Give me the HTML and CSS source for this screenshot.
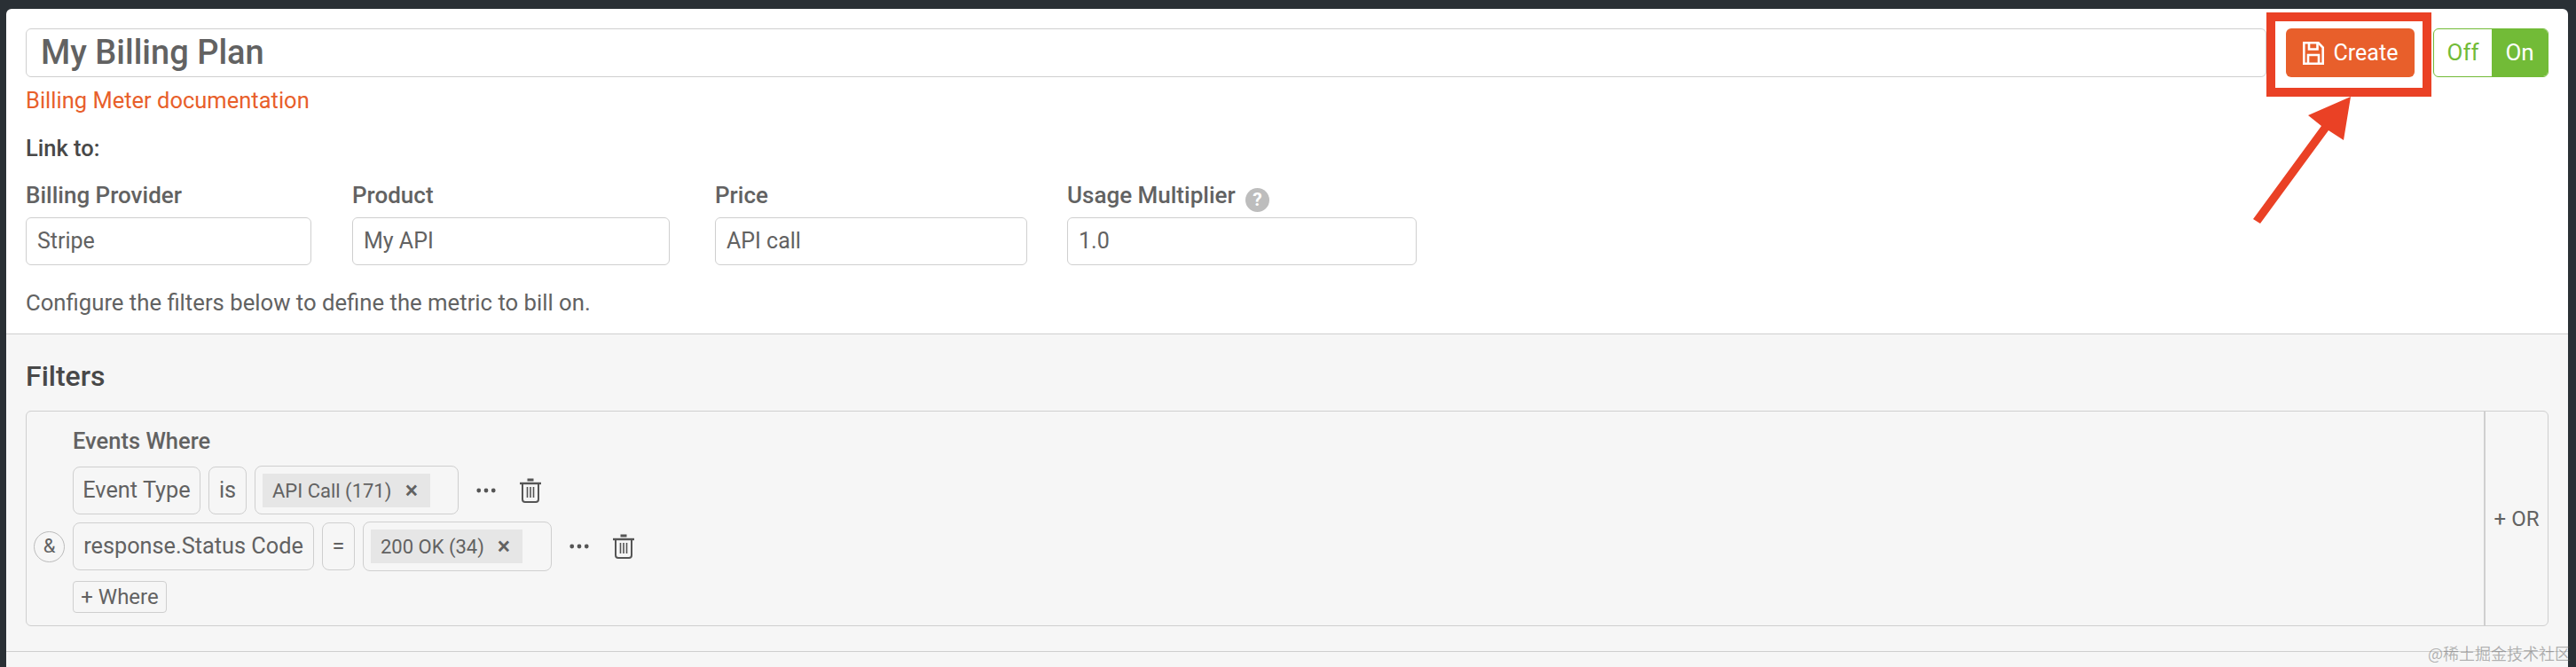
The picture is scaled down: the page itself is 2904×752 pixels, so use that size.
FILE: index.html
```html
<!DOCTYPE html>
<html lang="en">
<head>
  <meta charset="UTF-8" />
  <title>My Billing Plan</title>
  <link rel="stylesheet" href="styles.css">
</head>
<body>
  <div class="panel">
    <div class="top">
      <div class="title-row">
        <div class="title-input">My Billing Plan</div>
        <button class="create-btn">
          <svg class="save-icon" viewBox="0 0 24 26" fill="none" stroke="#fff" stroke-width="2.6">
            <path d="M1.3 1.3H17.5L22.7 6.5V24.7H1.3Z"/>
            <path d="M7 1.3V8.5H16.5V1.3"/>
            <path d="M6 24.7V15H18V24.7"/>
          </svg>
          Create
        </button>
        <div class="toggle">
          <span class="toggle-off">Off</span>
          <span class="toggle-on">On</span>
        </div>
      </div>

      <a class="doc-link" href="#">Billing Meter documentation</a>
      <div class="link-to">Link to:</div>

      <div class="fields">
        <div class="field field-provider">
          <label>Billing Provider</label>
          <div class="input">Stripe</div>
        </div>
        <div class="field field-product">
          <label>Product</label>
          <div class="input">My API</div>
        </div>
        <div class="field field-price">
          <label>Price</label>
          <div class="input">API call</div>
        </div>
        <div class="field field-usage">
          <label>Usage Multiplier <span class="help">?</span></label>
          <div class="input">1.0</div>
        </div>
      </div>

      <p class="hint">Configure the filters below to define the metric to bill on.</p>
    </div>

    <div class="filters">
      <h2>Filters</h2>
      <div class="filter-box">
        <div class="filter-body">
          <div class="events-where">Events Where</div>

          <div class="filter-row">
            <span class="conj conj-empty"></span>
            <div class="pill pill-type-1">Event Type</div>
            <div class="pill pill-op-1">is</div>
            <div class="value-box value-1">
              <span class="chip">API Call (171) <b>×</b></span>
            </div>
            <svg class="dots" viewBox="0 0 24 6" fill="#555">
              <circle cx="3" cy="3" r="2.6"/>
              <circle cx="12" cy="3" r="2.6"/>
              <circle cx="21" cy="3" r="2.6"/>
            </svg>
            <svg class="trash" viewBox="0 0 24 28" fill="none" stroke="#555" stroke-width="2">
              <path d="M0 6H24" stroke-width="2.4"/>
              <path d="M8.5 2H15.5" stroke-width="3"/>
              <path d="M3 6V24C3 26 4.5 27 6 27H18C19.5 27 21 26 21 24V6"/>
              <path d="M8.5 10V22M12 10V22M15.5 10V22" stroke-width="1.6"/>
            </svg>
          </div>

          <div class="filter-row filter-row-2">
            <span class="conj">&amp;</span>
            <div class="pill pill-type-2">response.Status Code</div>
            <div class="pill pill-op-2">=</div>
            <div class="value-box value-2">
              <span class="chip">200 OK (34) <b>×</b></span>
            </div>
            <svg class="dots" viewBox="0 0 24 6" fill="#555">
              <circle cx="3" cy="3" r="2.6"/>
              <circle cx="12" cy="3" r="2.6"/>
              <circle cx="21" cy="3" r="2.6"/>
            </svg>
            <svg class="trash" viewBox="0 0 24 28" fill="none" stroke="#555" stroke-width="2">
              <path d="M0 6H24" stroke-width="2.4"/>
              <path d="M8.5 2H15.5" stroke-width="3"/>
              <path d="M3 6V24C3 26 4.5 27 6 27H18C19.5 27 21 26 21 24V6"/>
              <path d="M8.5 10V22M12 10V22M15.5 10V22" stroke-width="1.6"/>
            </svg>
          </div>

          <button class="add-where">+ Where</button>
        </div>
        <div class="add-or">+ OR</div>
      </div>
    </div>
    <div class="next-section"></div>
  </div>

  <!-- annotation drawn over the screenshot -->
  <div class="callout-box"></div>
  <svg class="callout-arrow" viewBox="0 0 2904 752">
    <path d="M2540 247L2617 142L2602 130L2650 109L2642 158L2625 147L2548 252Z" fill="#ea4125"/>
  </svg>
  <div class="watermark">@稀土掘金技术社区</div>
</body>
</html>
```

FILE: styles.css
```css
:root {
  --text: #626262;
  --line: #cfcfcf;
  --orange: #e85f2b;
  --green: #72bb37;
  --grey-bg: #f6f6f6;
}

html, body {
  height: 100%;
}

body {
  margin: 0;
  height: 752px;
  overflow: hidden;
  box-sizing: border-box;
  padding: 10px 9px 0 7px;
  background: #2a3035;
  font-family: Roboto, sans-serif;
  color: var(--text);
}

.panel {
  background: #ffffff;
  border-radius: 6px 6px 0 0;
  height: 742px;
  overflow: hidden;
}

.top {
  padding: 22px 22px 20px 22px;
}

.title-row {
  display: flex;
  height: 55px;
}

.title-input {
  flex: 1;
  box-sizing: border-box;
  border: 1px solid var(--line);
  border-radius: 6px;
  padding-left: 16px;
  font-size: 38px;
  font-weight: 500;
  line-height: 52px;
}

.create-btn {
  width: 145px;
  margin: 0 21px 0 22px;
  padding: 0;
  border: none;
  border-radius: 6px;
  background: var(--orange);
  color: #fff;
  font-family: Roboto, sans-serif;
  font-size: 25px;
  display: flex;
  align-items: center;
  justify-content: center;
  gap: 11px;
}

.save-icon {
  width: 24px;
  height: 26px;
}

.toggle {
  display: flex;
  width: 130px;
  box-sizing: border-box;
  border: 1px solid var(--green);
  border-radius: 6px;
  overflow: hidden;
  font-size: 26px;
  line-height: 53px;
  text-align: center;
}

.toggle-off {
  width: 65px;
  color: var(--green);
}

.toggle-on {
  flex: 1;
  background: var(--green);
  color: #fff;
}

.doc-link {
  display: block;
  margin-top: 11px;
  color: var(--orange);
  font-size: 25.5px;
  line-height: 30px;
  text-decoration: none;
}

.link-to {
  margin-top: 24px;
  color: #484848;
  font-size: 25.5px;
  font-weight: 500;
  line-height: 30px;
}

.fields {
  display: flex;
  margin-top: 23px;
}

.field label {
  display: block;
  height: 30px;
  margin-bottom: 10px;
  font-size: 26px;
  font-weight: 500;
  line-height: 30px;
  white-space: nowrap;
}

.field-provider { width: 322px; margin-right: 46px; }
.field-product { width: 358px; margin-right: 51px; }
.field-price { width: 352px; margin-right: 45px; }
.field-usage { width: 394px; }

.input {
  box-sizing: border-box;
  height: 54px;
  border: 1px solid var(--line);
  border-radius: 6px;
  padding-left: 12px;
  font-size: 25px;
  line-height: 52px;
}

.help {
  display: inline-block;
  width: 27px;
  height: 27px;
  margin-left: 5px;
  border-radius: 50%;
  background: #bdbdbd;
  color: #fff;
  font-size: 21px;
  font-weight: 700;
  line-height: 27px;
  text-align: center;
  vertical-align: -3px;
}

.hint {
  margin: 27px 0 0;
  font-size: 25.7px;
  line-height: 30px;
}

.filters {
  background: var(--grey-bg);
  border-top: 1px solid var(--line);
  padding: 29px 22px 28px 22px;
}

.filters h2 {
  margin: 0 0 21px;
  color: #484848;
  font-size: 32px;
  font-weight: 500;
  line-height: 36px;
}

.filter-box {
  display: flex;
  box-sizing: border-box;
  height: 243px;
  border: 1px solid var(--line);
  border-radius: 6px;
}

.filter-body {
  flex: 1;
  padding: 19px 0 0 8px;
}

.events-where {
  margin: 0 0 14px 44px;
  font-size: 25.5px;
  font-weight: 500;
  line-height: 28px;
}

.filter-row {
  display: flex;
  align-items: center;
  height: 55px;
  font-size: 25.3px;
}

.filter-row-2 {
  height: 56px;
  margin-top: 8px;
}

.conj {
  box-sizing: border-box;
  flex: none;
  width: 35px;
  height: 35px;
  margin-right: 9px;
  border: 1px solid #bbb;
  border-radius: 50%;
  font-size: 22px;
  line-height: 32px;
  text-align: center;
}

.conj-empty {
  visibility: hidden;
}

.pill {
  box-sizing: border-box;
  height: 54px;
  margin-right: 9px;
  border: 1px solid var(--line);
  border-radius: 8px;
  line-height: 52px;
  text-align: center;
  white-space: nowrap;
}

.pill-type-1 { width: 144px; }
.pill-op-1 { width: 43px; }
.pill-type-2 { width: 272px; }
.pill-op-2 { width: 37px; }

.value-box {
  box-sizing: border-box;
  height: 100%;
  padding: 8px 0 0 8px;
  border: 1px solid var(--line);
  border-radius: 8px;
}

.value-1 { width: 230px; }
.value-2 { width: 213px; }

.chip {
  display: inline-flex;
  align-items: center;
  justify-content: space-between;
  height: 38px;
  padding: 0 14px 0 11px;
  background: #e6e6e6;
  font-size: 22px;
  white-space: pre;
}

.value-1 .chip { width: 189px; box-sizing: border-box; }
.value-2 .chip { width: 171px; box-sizing: border-box; }

.chip b {
  font-size: 27px;
  font-weight: 500;
}

.dots {
  flex: none;
  width: 22px;
  height: 6px;
  margin: 0 27px 0 20px;
}

.trash {
  flex: none;
  width: 24px;
  height: 28px;
}

.add-where {
  display: block;
  box-sizing: border-box;
  width: 106px;
  height: 36px;
  margin: 11px 0 0 44px;
  padding: 0;
  border: 1px solid var(--line);
  border-radius: 4px;
  background: var(--grey-bg);
  color: var(--text);
  font-family: Roboto, sans-serif;
  font-size: 24px;
}

.add-or {
  display: flex;
  align-items: center;
  justify-content: center;
  width: 70px;
  border-left: 2px solid var(--line);
  font-size: 24px;
}

.next-section {
  height: 30px;
  background: var(--grey-bg);
  border-top: 1px solid var(--line);
}

.callout-box {
  position: absolute;
  left: 2555px;
  top: 14px;
  width: 186px;
  height: 95px;
  box-sizing: border-box;
  border: 10px solid #ea4125;
}

.callout-arrow {
  position: absolute;
  left: 0;
  top: 0;
  width: 2904px;
  height: 752px;
  pointer-events: none;
}

.watermark {
  position: absolute;
  left: 2737px;
  top: 724px;
  color: rgba(90, 90, 90, 0.45);
  font-family: "Noto Sans CJK SC", sans-serif;
  font-size: 18px;
  line-height: 24px;
  white-space: nowrap;
}
```
